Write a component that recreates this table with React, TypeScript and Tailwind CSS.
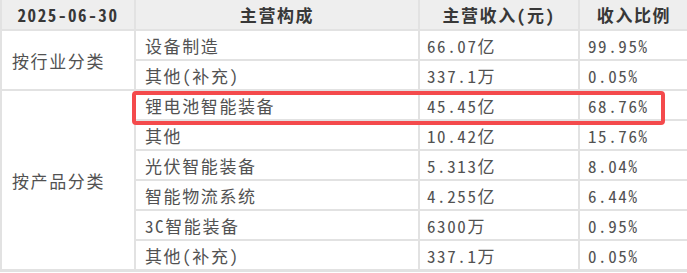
import React from "react";

const font = {
  fontFamily: '"Noto Sans Mono CJK SC", "Noto Sans CJK SC", "Liberation Mono", monospace',
};

type Row = { name: string; rev: string; pct: string };

const g1: Row[] = [
  { name: "设备制造", rev: "66.07亿", pct: "99.95%" },
  { name: "其他(补充)", rev: "337.1万", pct: "0.05%" },
];
const g2: Row[] = [
  { name: "锂电池智能装备", rev: "45.45亿", pct: "68.76%" },
  { name: "其他", rev: "10.42亿", pct: "15.76%" },
  { name: "光伏智能装备", rev: "5.313亿", pct: "8.04%" },
  { name: "智能物流系统", rev: "4.255亿", pct: "6.44%" },
  { name: "3C智能装备", rev: "6300万", pct: "0.95%" },
  { name: "其他(补充)", rev: "337.1万", pct: "0.05%" },
];

function Cells({ r }: { r: Row }) {
  return (
    <>
      <div className="bg-white flex items-center pl-[9px] pt-[1px]">{r.name}</div>
      <div className="bg-white flex items-center pl-[7px] pt-[1px]">{r.rev}</div>
      <div className="bg-white flex items-center pl-[8px] pt-[1px]">{r.pct}</div>
    </>
  );
}

export default function App() {
  return (
    <div className="w-[687px] h-[273px] bg-white relative" style={font}>
      <div className="grid grid-cols-[132px_282px_158px_108px] grid-rows-[29px_repeat(8,28px)] gap-[2px] bg-[#e2e2e2] pl-[2px] pb-[3px] text-[17px] tracking-[1.6px] text-[#525252] leading-none">
        <div className="bg-[#eeeeee] flex items-center justify-center font-bold text-[#383838]">2025-06-30</div>
        <div className="bg-[#eeeeee] flex items-center justify-center font-bold text-[#383838]">主营构成</div>
        <div className="bg-[#eeeeee] flex items-center justify-center font-bold text-[#383838]">主营收入(元)</div>
        <div className="bg-[#eeeeee] flex items-center justify-center font-bold text-[#383838]">收入比例</div>

        <div className="bg-white row-span-2 flex items-center pl-[10px]">按行业分类</div>
        <Cells r={g1[0]} />
        <Cells r={g1[1]} />

        <div className="bg-white row-span-6 flex items-center pl-[10px]">按产品分类</div>
        {g2.map((r, i) => (
          <Cells key={i} r={r} />
        ))}
      </div>
      <div className="absolute left-[132px] top-[91px] w-[533px] h-[34px] border-[4px] border-[#f44a4c] rounded-[4px]" />
    </div>
  );
}
